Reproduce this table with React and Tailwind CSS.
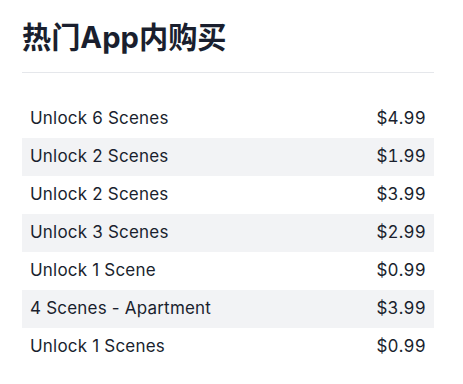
import React from "react";

const purchases = [
  { name: "Unlock 6 Scenes", price: "$4.99" },
  { name: "Unlock 2 Scenes", price: "$1.99" },
  { name: "Unlock 2 Scenes", price: "$3.99" },
  { name: "Unlock 3 Scenes", price: "$2.99" },
  { name: "Unlock 1 Scene", price: "$0.99" },
  { name: "4 Scenes - Apartment", price: "$3.99" },
  { name: "Unlock 1 Scenes", price: "$0.99" },
];

const App = () => {
  return (
    <div className="w-[463px] h-[384px] bg-white pl-[22px] pt-[18px] text-[#1a1f2e] font-['Inter','Noto_Sans_CJK_SC',sans-serif]">
      <div className="w-[412px]">
        {/* Heading */}
        <h2 className="text-[29.2px] leading-[40px] font-bold pb-[14px] border-b border-[#e5e7eb]">
          热门App内购买
        </h2>

        {/* In-app purchases list */}
        <div className="mt-[27px]">
          {purchases.map((item, i) => (
            <div
              key={i}
              className={`flex justify-between items-center h-[38px] px-[8px] text-[17px] tracking-[0.2px] ${
                i % 2 === 1 ? "bg-[#f2f3f5]" : "bg-white"
              }`}
            >
              <span>{item.name}</span>
              <span className="tabular-nums">{item.price}</span>
            </div>
          ))}
        </div>
      </div>
    </div>
  );
};

export default App;
